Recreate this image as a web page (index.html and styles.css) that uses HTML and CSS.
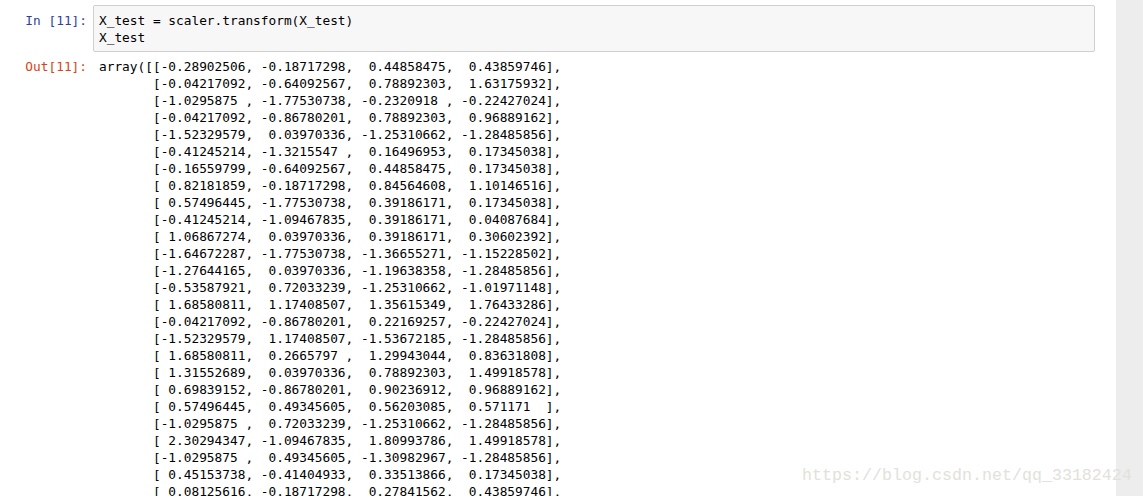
FILE: index.html
```html
<!DOCTYPE html>
<html lang="en">
<head>
<meta charset="utf-8">
<title>Notebook</title>
<link rel="stylesheet" href="styles.css">
</head>
<body>
<div class="window">
  <main class="notebook">
    <section class="cell input-cell">
      <div class="prompt in">In [11]:</div>
      <pre class="code">X_test = scaler.transform(X_test)
X_test</pre>
    </section>
    <section class="cell output-cell">
      <div class="prompt out">Out[11]:</div>
      <pre class="output">array([[-0.28902506, -0.18717298,  0.44858475,  0.43859746],
       [-0.04217092, -0.64092567,  0.78892303,  1.63175932],
       [-1.0295875 , -1.77530738, -0.2320918 , -0.22427024],
       [-0.04217092, -0.86780201,  0.78892303,  0.96889162],
       [-1.52329579,  0.03970336, -1.25310662, -1.28485856],
       [-0.41245214, -1.3215547 ,  0.16496953,  0.17345038],
       [-0.16559799, -0.64092567,  0.44858475,  0.17345038],
       [ 0.82181859, -0.18717298,  0.84564608,  1.10146516],
       [ 0.57496445, -1.77530738,  0.39186171,  0.17345038],
       [-0.41245214, -1.09467835,  0.39186171,  0.04087684],
       [ 1.06867274,  0.03970336,  0.39186171,  0.30602392],
       [-1.64672287, -1.77530738, -1.36655271, -1.15228502],
       [-1.27644165,  0.03970336, -1.19638358, -1.28485856],
       [-0.53587921,  0.72033239, -1.25310662, -1.01971148],
       [ 1.68580811,  1.17408507,  1.35615349,  1.76433286],
       [-0.04217092, -0.86780201,  0.22169257, -0.22427024],
       [-1.52329579,  1.17408507, -1.53672185, -1.28485856],
       [ 1.68580811,  0.2665797 ,  1.29943044,  0.83631808],
       [ 1.31552689,  0.03970336,  0.78892303,  1.49918578],
       [ 0.69839152, -0.86780201,  0.90236912,  0.96889162],
       [ 0.57496445,  0.49345605,  0.56203085,  0.571171  ],
       [-1.0295875 ,  0.72033239, -1.25310662, -1.28485856],
       [ 2.30294347, -1.09467835,  1.80993786,  1.49918578],
       [-1.0295875 ,  0.49345605, -1.30982967, -1.28485856],
       [ 0.45153738, -0.41404933,  0.33513866,  0.17345038],
       [ 0.08125616, -0.18717298,  0.27841562,  0.43859746],</pre>
    </section>
  </main>
  <aside class="gutter"></aside>
</div>
<div class="watermark">https://blog.csdn.net/qq_33182424</div>
</body>
</html>
```
FILE: styles.css
```css
html, body {
  margin: 0;
  height: 100%;
  overflow: hidden;
  background: #fff;
}

.window {
  display: flex;
  height: 496px;
  overflow: hidden;
}

.notebook {
  flex: 1;
  padding: 5px 21px 0 0;
  min-width: 0;
}

.gutter {
  width: 27px;
  background: #ededed;
}

.cell {
  display: flex;
  gap: 6px;
}

.input-cell {
  margin-bottom: 5px;
}

.prompt {
  width: 87px;
  flex: none;
  box-sizing: border-box;
  text-align: right;
  font: 12.8px/17px "DejaVu Sans Mono", monospace;
}

.input-cell .prompt {
  padding-top: 7px;
}

.output-cell .prompt {
  padding-top: 1px;
}

.in { color: #303f9f; }
.out { color: #d84315; }

pre {
  margin: 0;
  font: 12.8px/17px "DejaVu Sans Mono", monospace;
  color: #000;
}

.code {
  flex: 1;
  box-sizing: border-box;
  height: 47px;
  padding: 6px 5px;
  background: #f7f7f7;
  border: 1px solid #cfcfcf;
  border-radius: 2px;
}

.output {
  padding: 1px 6px;
}

.watermark {
  position: absolute;
  left: 802px;
  top: 466px;
  font: 16.67px/20px "Liberation Mono", monospace;
  color: #e2e2da;
  white-space: nowrap;
}
```
